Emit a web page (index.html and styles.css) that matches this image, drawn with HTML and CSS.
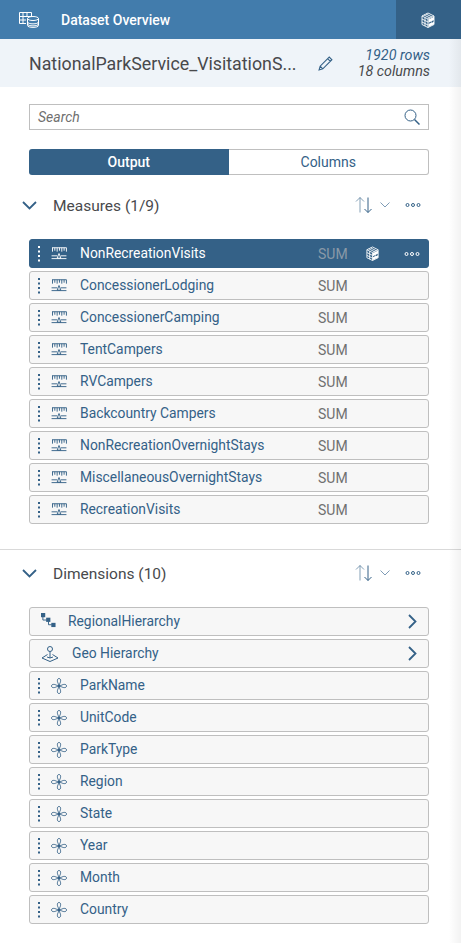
FILE: index.html
```html
<!DOCTYPE html>
<html lang="en">
<head>
<meta charset="utf-8">
<title>Dataset Overview</title>
<link rel="stylesheet" href="styles.css">
</head>
<body>
<svg class="defs" width="0" height="0" aria-hidden="true">
  <symbol id="grip" viewBox="0 0 4 16"><g fill="currentColor"><rect x="1" y="0" width="2" height="2"/><rect x="1" y="4.500" width="2" height="2"/><rect x="1" y="9" width="2" height="2"/><rect x="1" y="13.500" width="2" height="2"/></g></symbol>
  <symbol id="measure" viewBox="0.500 0 17 14"><g fill="none" stroke="currentColor" stroke-width="1"><path d="M1.500 .8H17M2 .8V5M4.500 .8V4M7 .8V5M9.500 .8V4M12 .8V5M14.500 .8V4M17 .8V5"/><path d="M1 9.500H7M11 9.500H17M1 12.500H17"/><path d="M9 7L11 12H7Z"/></g></symbol>
  <symbol id="dim" viewBox="0.500 0.500 17 17"><g fill="none" stroke="currentColor" stroke-width="1"><path d="M9 7.500C6.700 5 6.700 1 9 1S11.300 5 9 7.500ZM9 10.500C6.700 13 6.700 17 9 17S11.300 13 9 10.500ZM7.500 9C5 6.700 1 6.700 1 9S5 11.300 7.500 9ZM10.500 9C13 6.700 17 6.700 17 9S13 11.300 10.500 9Z"/></g><circle cx="9" cy="9" r="1.800" fill="currentColor"/></symbol>
  <symbol id="cube" viewBox="0 0 16 16"><g fill="none" stroke="currentColor" stroke-width=".9"><path d="M8 15.500L2 12.500V4L8 1L14 4V12.500ZM2 4L8 7L14 4M8 7V15.500M4 3L10 6M6 2L12 5M2 7L8 10M2 10L8 13M5 5.500V14"/></g><path d="M8.500 7.500L14 4.800V8L11.500 9.300V11L14 9.800V12.300L8.500 15V12L11 10.700V9.500L8.500 10.800Z" fill="currentColor"/></symbol>
  <symbol id="sort" viewBox="0 0 18 18"><g fill="none" stroke="currentColor"><path opacity=".6" d="M5 16.500V1.500M1 5.500L5 1.500L9 5.500"/><path d="M13 1.500V16.500M9.500 13L13 16.500L16.500 13"/></g></symbol>
  <symbol id="more" viewBox="0 0 16 4"><g fill="none" stroke="currentColor" stroke-width="1"><circle cx="2.500" cy="2" r="1.500"/><circle cx="8" cy="2" r="1.500"/><circle cx="13.500" cy="2" r="1.500"/></g></symbol>
  <symbol id="chev-s" viewBox="0 0 10 6"><path d="M.5 .5L5 5L9.500 .5" fill="none" stroke="currentColor"/></symbol>
  <symbol id="chev-l" viewBox="0 0 15 9"><path d="M1 1L7.500 7.500L14 1" fill="none" stroke="currentColor" stroke-width="1.800"/></symbol>
  <symbol id="chev-r" viewBox="0 0 9 15"><path d="M1 1L7.500 7.500L1 14" fill="none" stroke="currentColor" stroke-width="1.800"/></symbol>
</svg>

<div class="page">
  <header class="topbar">
    <div class="topbar-main">
      <svg class="dataset-icon" viewBox="0 0 21 16"><g fill="none" stroke="currentColor"><path d="M.5 .5H12.500V5M.5 .5V11.500H7M.5 4.500H12M.5 8H7M4 .5V11.500M8 .5V4.500"/><ellipse cx="14" cy="6.500" rx="5.500" ry="2"/><path d="M8.500 6.500V13.500C8.500 16 19.500 16 19.500 13.500V6.500M8.500 10C8.500 12.500 19.500 12.500 19.500 10M8.500 12C8.500 14.500 19.500 14.500 19.500 12"/></g></svg>
      <span class="topbar-title">Dataset Overview</span>
    </div>
    <div class="topbar-side"><svg class="cube-icon"><use href="#cube"/></svg></div>
  </header>

  <section class="subheader">
    <h1 class="dataset-name">NationalParkService_VisitationS...</h1>
    <svg class="pencil" viewBox="0 0 14 14"><path d="M1 13L2 9.500L10.500 1L13 3.500L4.500 12ZM2 9.500L4.500 12M9 2.500L11.500 5" fill="none" stroke="currentColor"/></svg>
    <div class="counts"><span class="rows">1920 rows</span><span>18 columns</span></div>
  </section>

  <main class="content">
    <div class="search">
      <span class="search-text">Search</span>
      <svg class="search-icon" viewBox="0 0 16 16"><g fill="none" stroke="currentColor"><circle cx="6.500" cy="6.500" r="5.500"/><path d="M10.500 10.500L15.500 15.500" stroke-width="1.500"/></g></svg>
    </div>

    <div class="segmented">
      <div class="segment active">Output</div>
      <div class="segment">Columns</div>
    </div>

    <div class="section-head measures-head">
      <svg class="chev-l"><use href="#chev-l"/></svg>
      <h2 class="section-title">Measures (1/9)</h2>
      <svg class="sort"><use href="#sort"/></svg>
      <svg class="chev-s"><use href="#chev-s"/></svg>
      <svg class="more"><use href="#more"/></svg>
    </div>

    <ul class="list">
      <li class="row selected">
        <svg class="grip"><use href="#grip"/></svg><svg class="type-icon measure"><use href="#measure"/></svg>
        <span class="name">NonRecreationVisits</span><span class="agg">SUM</span>
        <svg class="row-cube"><use href="#cube"/></svg><svg class="more row-more"><use href="#more"/></svg>
      </li>
      <li class="row"><svg class="grip"><use href="#grip"/></svg><svg class="type-icon measure"><use href="#measure"/></svg><span class="name">ConcessionerLodging</span><span class="agg">SUM</span></li>
      <li class="row"><svg class="grip"><use href="#grip"/></svg><svg class="type-icon measure"><use href="#measure"/></svg><span class="name">ConcessionerCamping</span><span class="agg">SUM</span></li>
      <li class="row"><svg class="grip"><use href="#grip"/></svg><svg class="type-icon measure"><use href="#measure"/></svg><span class="name">TentCampers</span><span class="agg">SUM</span></li>
      <li class="row"><svg class="grip"><use href="#grip"/></svg><svg class="type-icon measure"><use href="#measure"/></svg><span class="name">RVCampers</span><span class="agg">SUM</span></li>
      <li class="row"><svg class="grip"><use href="#grip"/></svg><svg class="type-icon measure"><use href="#measure"/></svg><span class="name">Backcountry Campers</span><span class="agg">SUM</span></li>
      <li class="row"><svg class="grip"><use href="#grip"/></svg><svg class="type-icon measure"><use href="#measure"/></svg><span class="name">NonRecreationOvernightStays</span><span class="agg">SUM</span></li>
      <li class="row"><svg class="grip"><use href="#grip"/></svg><svg class="type-icon measure"><use href="#measure"/></svg><span class="name">MiscellaneousOvernightStays</span><span class="agg">SUM</span></li>
      <li class="row"><svg class="grip"><use href="#grip"/></svg><svg class="type-icon measure"><use href="#measure"/></svg><span class="name">RecreationVisits</span><span class="agg">SUM</span></li>
    </ul>

    <hr class="divider">

    <div class="section-head">
      <svg class="chev-l"><use href="#chev-l"/></svg>
      <h2 class="section-title">Dimensions (10)</h2>
      <svg class="sort"><use href="#sort"/></svg>
      <svg class="chev-s"><use href="#chev-s"/></svg>
      <svg class="more"><use href="#more"/></svg>
    </div>

    <ul class="list">
      <li class="row hier">
        <svg class="hier-icon regional" viewBox="0 0 16 16"><g fill="currentColor"><rect x="0" y="0" width="4.500" height="4.500"/><rect x="5.500" y="5" width="4.500" height="4.500"/><rect x="11" y="10.500" width="4.500" height="4.500"/></g><path d="M2 4V7.500H6M8 9V12.500H11.500" fill="none" stroke="currentColor"/></svg>
        <span class="name">RegionalHierarchy</span>
        <svg class="chev-r"><use href="#chev-r"/></svg>
      </li>
      <li class="row hier">
        <svg class="hier-icon geo" viewBox="0 0 18 16"><g fill="none" stroke="currentColor"><circle cx="9" cy="3" r="2.500"/><path d="M9 5.500V12M6.500 8.500L1 12L9 15.500L17 12L11.500 8.500M6 11L9 12L12 11"/></g></svg>
        <span class="name geo-name">Geo Hierarchy</span>
        <svg class="chev-r"><use href="#chev-r"/></svg>
      </li>
      <li class="row"><svg class="grip"><use href="#grip"/></svg><svg class="type-icon dim"><use href="#dim"/></svg><span class="name">ParkName</span></li>
      <li class="row"><svg class="grip"><use href="#grip"/></svg><svg class="type-icon dim"><use href="#dim"/></svg><span class="name">UnitCode</span></li>
      <li class="row"><svg class="grip"><use href="#grip"/></svg><svg class="type-icon dim"><use href="#dim"/></svg><span class="name">ParkType</span></li>
      <li class="row"><svg class="grip"><use href="#grip"/></svg><svg class="type-icon dim"><use href="#dim"/></svg><span class="name">Region</span></li>
      <li class="row"><svg class="grip"><use href="#grip"/></svg><svg class="type-icon dim"><use href="#dim"/></svg><span class="name">State</span></li>
      <li class="row"><svg class="grip"><use href="#grip"/></svg><svg class="type-icon dim"><use href="#dim"/></svg><span class="name">Year</span></li>
      <li class="row"><svg class="grip"><use href="#grip"/></svg><svg class="type-icon dim"><use href="#dim"/></svg><span class="name">Month</span></li>
      <li class="row"><svg class="grip"><use href="#grip"/></svg><svg class="type-icon dim"><use href="#dim"/></svg><span class="name">Country</span></li>
    </ul>
  </main>
  <div class="edge-shadow"></div>
</div>
</body>
</html>
```
FILE: styles.css
```css
* { box-sizing: border-box; }
html, body { margin: 0; padding: 0; height: 100%; overflow: hidden; background: #fff; }
body { font-family: Roboto, "Noto Sans", sans-serif; font-size: 14px; color: #346187; }
.defs { position: absolute; }
svg { display: block; flex: none; }
.page { position: relative; width: 461px; height: 943px; overflow: hidden; }

.topbar { display: flex; height: 39px; background: #427cac; color: #fff; }
.topbar-main { flex: 1; display: flex; align-items: center; padding-left: 19px; }
.dataset-icon { width: 21px; height: 16px; margin-right: 21px; }
.topbar-title { font-size: 14px; font-weight: 500; }
.topbar-side { width: 65px; background: #346187; display: flex; align-items: center; justify-content: center; padding-right: 2px; }
.cube-icon { width: 16px; height: 16px; }

.subheader { display: flex; align-items: center; height: 48px; background: #eff4f9; padding: 0 31px 0 29px; }
.dataset-name { margin: 0; font-size: 17.800px; font-weight: 400; color: #48494c; white-space: nowrap; width: 289px; }
.pencil { width: 15px; height: 15px; }
.counts { margin-left: auto; display: flex; flex-direction: column; align-items: flex-end; font-size: 14.300px; font-style: italic; line-height: 16px; color: #48494c; }
.rows { color: #346187; }

.content { padding: 17px 32px 0 29px; }
.search { display: flex; align-items: center; justify-content: space-between; height: 26px; border: 1px solid #bfbfbf; padding: 0 8px; background: #fff; }
.search-text { font-style: italic; font-size: 14px; color: #6f6f6f; }
.search-icon { width: 16px; height: 16px; color: #346187; }

.segmented { display: flex; height: 26px; margin-top: 19px; }
.segment { flex: 1; display: flex; align-items: center; justify-content: center; font-size: 14px; border: 1px solid #bfbfbf; border-left: 0; border-radius: 0 3px 3px 0; background: #fff; }
.segment.active { background: #346187; border: 0; color: #fff; font-weight: 500; border-radius: 3px 0 0 3px; }

.section-head { display: flex; align-items: center; height: 30px; margin-left: -7px; }
.measures-head { margin-top: 15px; }
.chev-l { width: 15px; height: 9px; color: #346187; }
.section-title { margin: 0 0 0 16px; padding-top: 2px; flex: 1; font-size: 15.500px; font-weight: 400; color: #48494c; }
.sort { width: 18px; height: 18px; color: #346187; }
.chev-s { width: 10px; height: 6px; margin-left: 7px; color: #7f9cb6; }
.more { width: 16px; height: 4px; margin: 0 8px 0 15px; color: #346187; }

.list { list-style: none; margin: 19px 0 0; padding: 0; display: flex; flex-direction: column; gap: 3px; }
.row { display: flex; align-items: center; height: 29px; border: 1px solid #bfbfbf; border-radius: 3px; background: #f7f7f7; padding-left: 7px; }
.row.selected { background: #346187; border-color: #346187; color: #fff; }
.grip { width: 4px; height: 16px; margin-right: 10px; }
.type-icon { width: 16px; height: 16px; margin-right: 13px; }
.type-icon.measure { height: 13px; }
.name { font-size: 13.850px; white-space: nowrap; flex: none; padding-bottom: 2px; }
.row .name { width: 238px; }
.agg { font-size: 14px; color: #707070; width: 47px; }
.row.selected .agg { color: #8a9aa8; }
.row-cube { width: 15px; height: 15px; }
.row-more { margin: 0 0 0 24px; color: #fff; }

.divider { border: 0; border-top: 1px solid #d9d9d9; margin: 25px -32px 0 -29px; }
.divider + .section-head { margin-top: 8px; }

.hier { padding-left: 11px; }
.hier-icon { color: #346187; }
.regional { width: 15px; height: 15px; margin: -3px 12px 0 0; }
.geo { width: 18px; height: 16px; margin-right: 13px; }
.row.hier .name { flex: 1; width: auto; }
.chev-r { width: 9px; height: 15px; margin-right: 11px; color: #346187; }

.edge-shadow { position: absolute; top: 39px; right: 0; bottom: 0; width: 12px; background: linear-gradient(to right, rgba(0,0,0,0), rgba(0,0,0,.05)); }
```
